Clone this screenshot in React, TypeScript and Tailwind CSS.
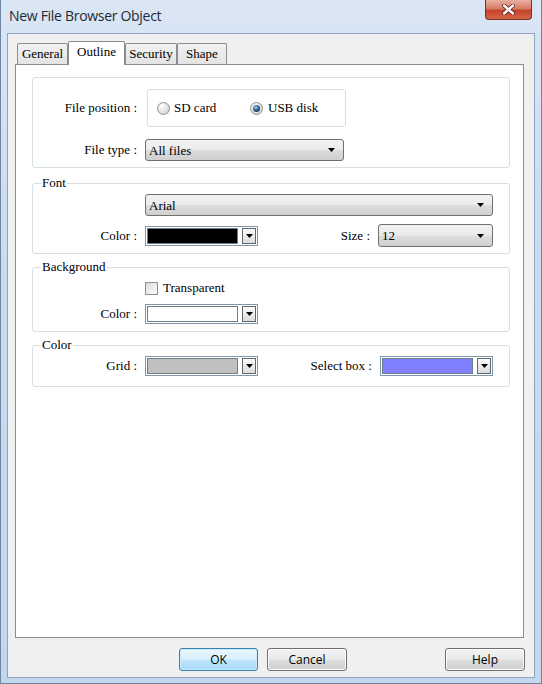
import type { ReactNode } from "react";

const btnGray =
  "bg-[linear-gradient(180deg,#f2f2f2_0%,#ebebeb_48%,#dddddd_52%,#cfcfcf_100%)]";

function Arrow() {
  return (
    <svg width="7" height="4" viewBox="0 0 7 4">
      <path d="M0 0h7L3.5 4z" fill="#000" />
    </svg>
  );
}

function Select({ text, className = "" }: { text: string; className?: string }) {
  return (
    <div
      className={`flex h-[22px] items-center justify-between rounded-[3px] border border-[#707070] pl-[3px] pr-[8px] ${btnGray} ${className}`}
    >
      <span className="leading-none">{text}</span>
      <Arrow />
    </div>
  );
}

function ColorPick({ swatch }: { swatch: string }) {
  return (
    <div className="flex h-[20px] w-[113px] items-stretch border border-[#7f97a8] bg-white p-[1px]">
      <div className={`w-[91px] border border-[#6e7f8c] ${swatch}`} />
      <div className="flex-1" />
      <div className="flex w-[14px] items-center justify-center border border-[#5d6a74] bg-[linear-gradient(180deg,#fafafa,#dcdcdc)]">
        <Arrow />
      </div>
    </div>
  );
}

function Label({ children }: { children: ReactNode }) {
  return <span className="w-[104px] shrink-0 text-right">{children}</span>;
}

function Radio({ checked }: { checked?: boolean }) {
  return (
    <span className="flex h-[13px] w-[13px] items-center justify-center rounded-full border border-[#8e8f8f] bg-[radial-gradient(circle_at_35%_30%,#ffffff,#d4d4d4_80%)]">
      {checked && (
        <span className="h-[7px] w-[7px] rounded-full bg-[radial-gradient(circle_at_40%_35%,#9fd2f5,#24507c_55%,#0e2a48)]" />
      )}
    </span>
  );
}

function Group({ title, className = "", children }: { title: string; className?: string; children: ReactNode }) {
  return (
    <fieldset className={`rounded-[3px] border border-[#d5dfe5] pr-[16px] ${className}`}>
      <legend className="ml-[8px] px-[1px] leading-[16px]">{title}</legend>
      {children}
    </fieldset>
  );
}

function Button({ children, primary }: { children: ReactNode; primary?: boolean }) {
  return (
    <button
      className={
        primary
          ? "h-[23px] w-[79px] rounded-[3px] border border-[#3c7fb1] bg-[linear-gradient(180deg,#eaf6fd_0%,#d9f0fc_48%,#bee6fd_52%,#a7d9f5_100%)] shadow-[inset_0_0_0_1px_#c9ecfb] [font-family:'Open_Sans',sans-serif] text-[12px]"
          : `h-[23px] w-[80px] rounded-[3px] border border-[#707070] ${btnGray} shadow-[inset_0_0_0_1px_#fbfbfb] [font-family:'Open_Sans',sans-serif] text-[12px]`
      }
    >
      {children}
    </button>
  );
}

const tabs = [
  { name: "General", w: "w-[51px]" },
  { name: "Outline", w: "w-[57px]", active: true },
  { name: "Security", w: "w-[52px]" },
  { name: "Shape", w: "w-[50px]" },
];

export default function App() {
  return (
    <div className="flex h-[684px] w-[542px] flex-col border-x border-b border-[#6f86a3] bg-[linear-gradient(180deg,#dae6f4_0%,#c9dbef_40%,#c3d6ec_100%)] px-[6px] pb-[5px] [font-family:'Liberation_Serif','Times_New_Roman',serif] text-[13px] leading-[16px] text-black">
      {/* title bar */}
      <div className="flex h-[33px] shrink-0 items-start justify-between">
        <span className="mt-[6px] pl-[2px] [font-family:'Open_Sans',sans-serif] text-[14px] leading-[20px] tracking-[-0.3px] text-[#1e2a38]">
          New File Browser Object
        </span>
        <div className="mr-[3px] flex h-[20px] w-[47px] items-center justify-center rounded-b-[4px] border border-t-0 border-[#7b3125] bg-[linear-gradient(180deg,#eab0a2_0%,#d67c66_45%,#c2442b_55%,#d86448_100%)]">
          <svg width="13" height="11" viewBox="0 0 13 11">
            <path d="M2 1.5l9 8M11 1.5l-9 8" stroke="#5a1f15" strokeWidth="4" strokeLinecap="round" />
            <path d="M2 1.5l9 8M11 1.5l-9 8" stroke="#fff" strokeWidth="2.4" strokeLinecap="round" />
          </svg>
        </div>
      </div>

      {/* client */}
      <div className="flex flex-1 flex-col border border-[#8fa4bf] bg-[#f0f0f0]">
        <div className="flex flex-col pl-[7px] pr-[10px] pt-[7px]">
          <div className="flex h-[23px] items-end pl-[2px]">
            {tabs.map((t) =>
              t.active ? (
                <div
                  key={t.name}
                  className={`relative z-10 -mb-px flex h-[24px] ${t.w} items-start justify-center rounded-t-[2px] border border-b-0 border-[#898c95] bg-white pt-[2px]`}
                >
                  {t.name}
                </div>
              ) : (
                <div
                  key={t.name}
                  className={`flex h-[21px] ${t.w} items-center justify-center rounded-t-[2px] border border-b-0 border-[#898c95] bg-[linear-gradient(180deg,#f2f2f2,#e3e3e3)]`}
                >
                  {t.name}
                </div>
              ),
            )}
          </div>

          {/* tab panel */}
          <div className="flex h-[574px] flex-col border border-[#898c95] bg-white pl-[16px] pr-[13px] pt-[12px]">
            <div className="flex flex-col gap-[12px] rounded-[3px] border border-[#d5dfe5] pb-[6px] pr-[16px] pt-[11px]">
              <div className="flex items-center gap-[8px]">
                <Label>File position :</Label>
                <div className="ml-[2px] flex h-[38px] w-[199px] items-center rounded-[3px] border border-[#d5dfe5] pl-[9px]">
                  <span className="flex w-[93px] items-center gap-[4px]">
                    <Radio />
                    SD card
                  </span>
                  <span className="flex items-center gap-[5px]">
                    <Radio checked />
                    USB disk
                  </span>
                </div>
              </div>
              <div className="flex items-center gap-[8px]">
                <Label>File type :</Label>
                <Select text="All files" className="w-[199px]" />
              </div>
            </div>

            <Group title="Font" className="mt-[7px] pb-[6px]">
              <div className="mt-[3px] flex items-center gap-[8px]">
                <span className="w-[104px] shrink-0" />
                <Select text="Arial" className="flex-1" />
              </div>
              <div className="mt-[8px] flex items-center gap-[8px]">
                <Label>Color :</Label>
                <ColorPick swatch="bg-black" />
                <span className="ml-auto">Size :</span>
                <Select text="12" className="h-[23px] w-[115px]" />
              </div>
            </Group>

            <Group title="Background" className="mt-[5px] pb-[7px]">
              <div className="mt-[5px] flex items-center gap-[8px]">
                <span className="w-[104px] shrink-0" />
                <span className="flex items-center gap-[5px]">
                  <span className="h-[13px] w-[13px] border border-[#8e8f8f] bg-[linear-gradient(135deg,#dcdcdc,#fbfbfb)]" />
                  Transparent
                </span>
              </div>
              <div className="mt-[8px] flex items-center gap-[8px]">
                <Label>Color :</Label>
                <ColorPick swatch="bg-white" />
              </div>
            </Group>

            <Group title="Color" className="mt-[5px] pb-[10px]">
              <div className="mt-[3px] flex items-center gap-[8px]">
                <Label>Grid :</Label>
                <ColorPick swatch="bg-[#c0c0c0]" />
                <span className="ml-auto">Select box :</span>
                <ColorPick swatch="bg-[#8080ff]" />
              </div>
            </Group>
          </div>
        </div>

        {/* buttons */}
        <div className="mt-[10px] flex items-center justify-end gap-[9px] pr-[9px]">
          <Button primary>OK</Button>
          <Button>Cancel</Button>
          <div className="ml-[89px]">
            <Button>Help</Button>
          </div>
        </div>
      </div>
    </div>
  );
}
